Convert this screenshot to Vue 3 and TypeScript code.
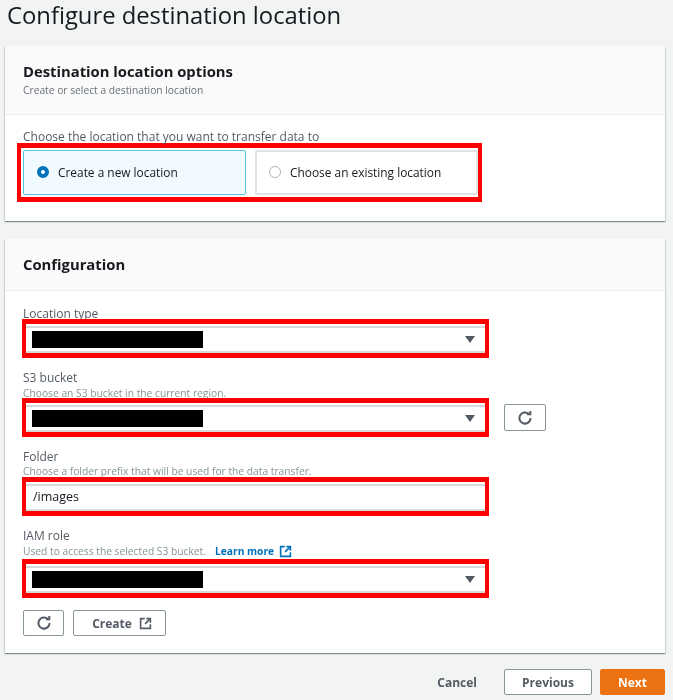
<script setup lang="ts">
const redaction = true
</script>

<template>
  <main class="page">
    <h1 class="title">Configure destination location</h1>

    <section class="card">
      <header class="card-head options-head">
        <h2>Destination location options</h2>
        <p class="head-desc">Create or select a destination location</p>
      </header>
      <div class="options-body">
        <p class="choose">Choose the location that you want to transfer data to</p>
        <div class="mark tiles">
          <label class="tile selected">
            <span class="radio on"></span>
            <span>Create a new location</span>
          </label>
          <label class="tile">
            <span class="radio"></span>
            <span>Choose an existing location</span>
          </label>
        </div>
      </div>
    </section>

    <section class="card second">
      <header class="card-head config-head">
        <h2>Configuration</h2>
      </header>
      <div class="config-body">
        <div class="field first">
          <div class="label">Location type</div>
          <div class="mark box">
            <div class="input">
              <span v-if="redaction" class="redact"></span>
              <span class="caret"></span>
            </div>
          </div>
        </div>

        <div class="field">
          <div class="label">S3 bucket</div>
          <div class="desc s3-desc">Choose an S3 bucket in the current region.</div>
          <div class="row">
            <div class="mark box">
              <div class="input">
                <span v-if="redaction" class="redact"></span>
                <span class="caret"></span>
              </div>
            </div>
            <button class="btn icon-btn side" type="button" aria-label="Refresh">
              <svg class="ico-refresh" viewBox="0 0 16 16"><path d="M13.6 8a5.6 5.6 0 1 1-1.9-4.2" /><path d="M13.3 1v3.3H10" /></svg>
            </button>
          </div>
        </div>

        <div class="field">
          <div class="label">Folder</div>
          <div class="desc">Choose a folder prefix that will be used for the data transfer.</div>
          <div class="mark box">
            <div class="input text">/images</div>
          </div>
        </div>

        <div class="field">
          <div class="label">IAM role</div>
          <div class="desc iam-desc">
            Used to access the selected S3 bucket.
            <a class="learn">Learn more
              <svg class="ico-ext" viewBox="0 0 16 16"><path d="M7 2H2v12h12V9" /><path d="M9 2h5v5" /><path d="M14 2 7.5 8.5" /></svg>
            </a>
          </div>
          <div class="mark box">
            <div class="input">
              <span v-if="redaction" class="redact"></span>
              <span class="caret"></span>
            </div>
          </div>
        </div>

        <div class="actions">
          <button class="btn icon-btn" type="button" aria-label="Refresh">
            <svg class="ico-refresh" viewBox="0 0 16 16"><path d="M13.6 8a5.6 5.6 0 1 1-1.9-4.2" /><path d="M13.3 1v3.3H10" /></svg>
          </button>
          <button class="btn create" type="button">
            Create
            <svg class="ico-ext" viewBox="0 0 16 16"><path d="M7 2H2v12h12V9" /><path d="M9 2h5v5" /><path d="M14 2 7.5 8.5" /></svg>
          </button>
        </div>
      </div>
    </section>

    <footer class="footer">
      <a class="cancel">Cancel</a>
      <button class="btn previous" type="button">Previous</button>
      <button class="btn next" type="button">Next</button>
    </footer>
  </main>
</template>

<style>
html, body { margin: 0; background: #f2f3f3; }
</style>

<style scoped>
.page {
  box-sizing: border-box;
  width: 673px;
  height: 700px;
  overflow: hidden;
  padding: 0 8px 0 5px;
  background: #f2f3f3;
  font-family: "Open Sans", "Noto Sans", sans-serif;
  color: #16191f;
  filter: blur(0.4px);
}
.title {
  margin: 0 0 0 2px;
  height: 46px;
  font-size: 23.8px;
  line-height: 30px;
  font-weight: 400;
}
.card {
  background: #fff;
  box-shadow: 0 1px 1px 0 rgba(0, 28, 36, 0.35), 1px 1px 1px 0 rgba(0, 28, 36, 0.1), -1px 1px 1px 0 rgba(0, 28, 36, 0.1);
}
.second { margin-top: 18px; }
.card-head {
  box-sizing: border-box;
  background: #fafafa;
  border-bottom: 1px solid #eaeded;
  padding-left: 18px;
}
.card-head h2 {
  margin: 0;
  font-size: 14.8px;
  font-weight: 700;
  line-height: 20px;
}
.options-head { height: 69px; padding-top: 15px; }
.config-head { height: 52px; padding-top: 15px; }
.head-desc {
  margin: 2px 0 0;
  font-size: 10.25px;
  line-height: 14px;
  color: #687078;
}
.options-body { box-sizing: border-box; height: 106px; padding: 15px 0 0 12px; }
.choose {
  margin: 0 0 0 6px;
  font-size: 12px;
  line-height: 14px;
  color: #545b64;
}
.mark {
  box-sizing: border-box;
  border: solid #f00;
  border-width: 5px 4px;
}
.tiles {
  display: flex;
  gap: 9px;
  width: 465px;
  height: 59px;
  margin-top: -1px;
  padding: 2px 0 0 2px;
  background: #fff;
}
.tile {
  box-sizing: border-box;
  flex: 0 0 223px;
  height: 45px;
  display: flex;
  align-items: center;
  gap: 9px;
  padding-bottom: 1px;
  border: 2px solid #e1e4e4;
  border-radius: 2px;
  font-size: 11.9px;
  color: #16191f;
}
.tile.selected {
  border: 1px solid #5cc3dc;
  background: #f1faff;
  padding-left: 13px;
}
.tile:not(.selected) { padding-left: 12px; }
.radio {
  box-sizing: border-box;
  width: 12px;
  height: 12px;
  border-radius: 50%;
  border: 1px solid #aab7b8;
  background: #fff;
  flex: none;
}
.radio.on { border: 4px solid #0073bb; }

.config-body { padding: 15px 0 0 17px; height: 362px; box-sizing: border-box; }
.field { margin-bottom: 12px; }
.label {
  margin-left: 1px;
  height: 14px;
  font-size: 12px;
  line-height: 16px;
  color: #545b64;
}
.first .box { margin-top: -1px; }
.desc {
  margin-top: 2px;
  margin-left: 1px;
  font-size: 10.25px;
  line-height: 13px;
  height: 12px;
  color: #879596;
  white-space: nowrap;
}
.s3-desc { line-height: 15px; }
.iam-desc { margin-top: 3px; margin-bottom: 2px; display: flex; align-items: center; gap: 9px; }
.box { width: 467px; height: 39px; background: #fff; position: relative; }
.row { display: flex; align-items: flex-start; gap: 15px; }
.input {
  box-sizing: border-box;
  height: 27px;
  margin-top: 2px;
  border-top: 2px solid #d5dbdb;
  border-bottom: 2px solid #d5dbdb;
  display: flex;
  align-items: center;
  justify-content: space-between;
  padding: 0 10px 0 6px;
}
.input.text {
  font-size: 12.5px;
  color: #16191f;
  padding: 0 0 3px 7px;
}
.redact {
  display: block;
  width: 171px;
  height: 17px;
  background: #000;
}
.caret {
  width: 0;
  height: 0;
  border-left: 5px solid transparent;
  border-right: 5px solid transparent;
  border-top: 7px solid #545b64;
}
.btn {
  box-sizing: border-box;
  height: 26px;
  font-family: inherit;
  background: #fff;
  border: 1px solid #879596;
  border-radius: 2px;
  color: #545b64;
  font-size: 12px;
  font-weight: 700;
  display: inline-flex;
  align-items: center;
  justify-content: center;
  padding: 0;
}
.icon-btn { width: 41px; }
.side { margin-top: 6px; width: 42px; height: 27px; }
.ico-refresh { width: 16px; height: 16px; fill: none; stroke: #545b64; stroke-width: 2; }
.ico-ext { width: 13px; height: 13px; fill: none; stroke: #545b64; stroke-width: 2; }
.learn {
  display: inline-flex;
  align-items: center;
  gap: 5px;
  color: #0073bb;
  font-weight: 700;
}
.learn .ico-ext { stroke: #0073bb; }
.actions { display: flex; gap: 9px; margin-left: 1px; }
.create { width: 93px; gap: 7px; padding-left: 5px; }
.footer {
  display: flex;
  align-items: center;
  justify-content: flex-end;
  gap: 8px;
  margin-top: 16px;
}
.cancel {
  margin-right: 19px;
  padding-top: 1px;
  font-size: 12px;
  font-weight: 700;
  color: #545b64;
}
.previous { width: 88px; }
.next { width: 65px; background: #ec7211; border-color: #ec7211; color: #fff; }
</style>
